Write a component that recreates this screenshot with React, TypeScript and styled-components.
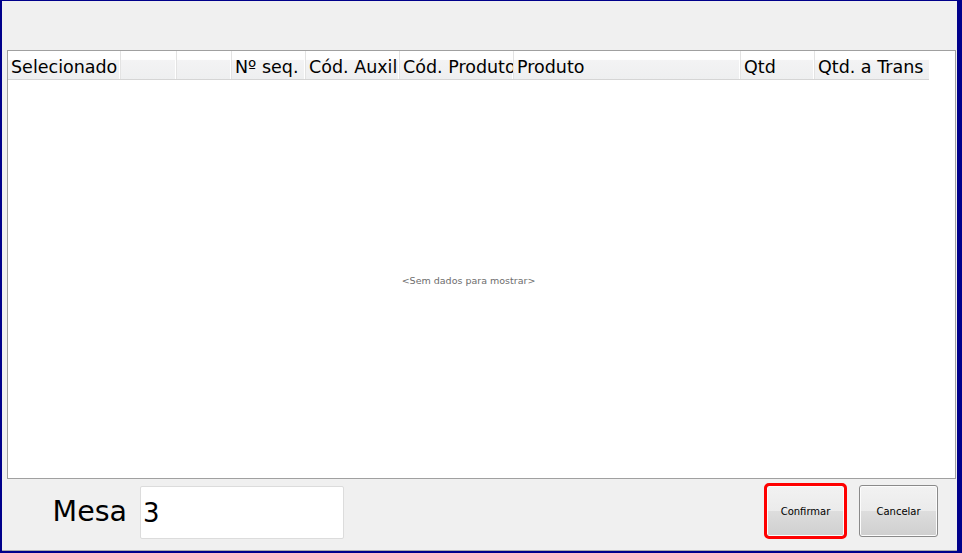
import React from 'react';
import styled, { createGlobalStyle } from 'styled-components';

const GlobalStyle = createGlobalStyle`
  html, body { margin: 0; padding: 0; background: #f0f0f0; }
  * { box-sizing: border-box; }
`;

const columns = [
  { label: 'Selecionado', width: 113 },
  { label: '', width: 56 },
  { label: '', width: 55 },
  { label: 'Nº seq.', width: 74 },
  { label: 'Cód. Auxil', width: 94 },
  { label: 'Cód. Produto', width: 114 },
  { label: 'Produto', width: 227 },
  { label: 'Qtd', width: 74 },
  { label: 'Qtd. a Trans', width: 114 },
];

const Window = styled.div`
  width: 962px;
  height: 553px;
  background: #f0f0f0;
  border-style: solid;
  border-color: #00008b;
  border-width: 1px 5px 2px 2px;
  display: flex;
  flex-direction: column;
  font-family: 'DejaVu Sans', Tahoma, sans-serif;
`;

const Body = styled.div`
  flex: 1;
  display: flex;
  flex-direction: column;
  padding: 49px 1px 0 5px;
  border-bottom: 1px solid #a9a9a9;
`;

const Grid = styled.div`
  height: 429px;
  background: #fff;
  border: 1px solid #a0a0a0;
  display: flex;
  flex-direction: column;
`;

const HeaderRow = styled.div`
  display: flex;
  height: 29px;
  width: 921px;
  border-bottom: 1px solid #d5d5d5;
  background: linear-gradient(#ffffff 0%, #ffffff 30%, #f3f3f4 34%, #eeeff0 100%);
`;

const HeaderCell = styled.div<{ $w: number }>`
  width: ${(p) => p.$w}px;
  flex: none;
  overflow: hidden;
  white-space: nowrap;
  padding: 6px 0 0 3px;
  font-size: 17.5px;
  color: #000;
  border-right: 1px solid #e3e3e3;
  box-shadow: inset -1px 0 0 #fff;
  &:last-child { border-right: none; box-shadow: none; }
`;

const EmptyArea = styled.div`
  flex: 1;
  display: flex;
  align-items: center;
  justify-content: center;
  padding: 2px 26px 0 0;
  font-size: 9.5px;
  color: #6d6d6d;
`;

const Footer = styled.div`
  flex: 1;
  display: flex;
  align-items: flex-start;
  padding: 7px 18px 0 0;
`;

const Label = styled.div`
  width: 133px;
  text-align: right;
  padding-right: 13px;
  font-size: 28.5px;
  line-height: 52px;
  color: #000;
`;

const Input = styled.input`
  width: 204px;
  height: 53px;
  border: 1px solid #dcdcdc;
  border-radius: 2px;
  background: #fff;
  padding: 0 2px;
  font-family: 'DejaVu Sans', Tahoma, sans-serif;
  font-size: 26px;
  color: #000;
  outline: none;
`;

const Spacer = styled.div`
  flex: 1;
`;

const Button = styled.button<{ $marked?: boolean }>`
  width: 79px;
  height: 52px;
  margin: -1px 0 0 ${(p) => (p.$marked ? 0 : 14)}px;
  border: 1px solid #8a8a8a;
  border-radius: 3px;
  background: linear-gradient(#f2f2f2 0%, #ebebeb 50%, #dddddd 51%, #cfcfcf 100%);
  box-shadow: inset 0 0 0 1px #fcfcfc;
  outline: ${(p) => (p.$marked ? '3px solid #ff0000' : 'none')};
  outline-offset: -1px;
  font-family: 'DejaVu Sans', Tahoma, sans-serif;
  font-size: 10px;
  color: #000;
  padding: 0;
`;

export default function App() {
  return (
    <>
      <GlobalStyle />
      <Window>
        <Body>
          <Grid>
            <HeaderRow>
              {columns.map((c, i) => (
                <HeaderCell key={i} $w={c.width}>{c.label}</HeaderCell>
              ))}
            </HeaderRow>
            <EmptyArea>&lt;Sem dados para mostrar&gt;</EmptyArea>
          </Grid>
          <Footer>
            <Label>Mesa</Label>
            <Input defaultValue="3" />
            <Spacer />
            <Button $marked>Confirmar</Button>
            <Button>Cancelar</Button>
          </Footer>
        </Body>
      </Window>
    </>
  );
}
